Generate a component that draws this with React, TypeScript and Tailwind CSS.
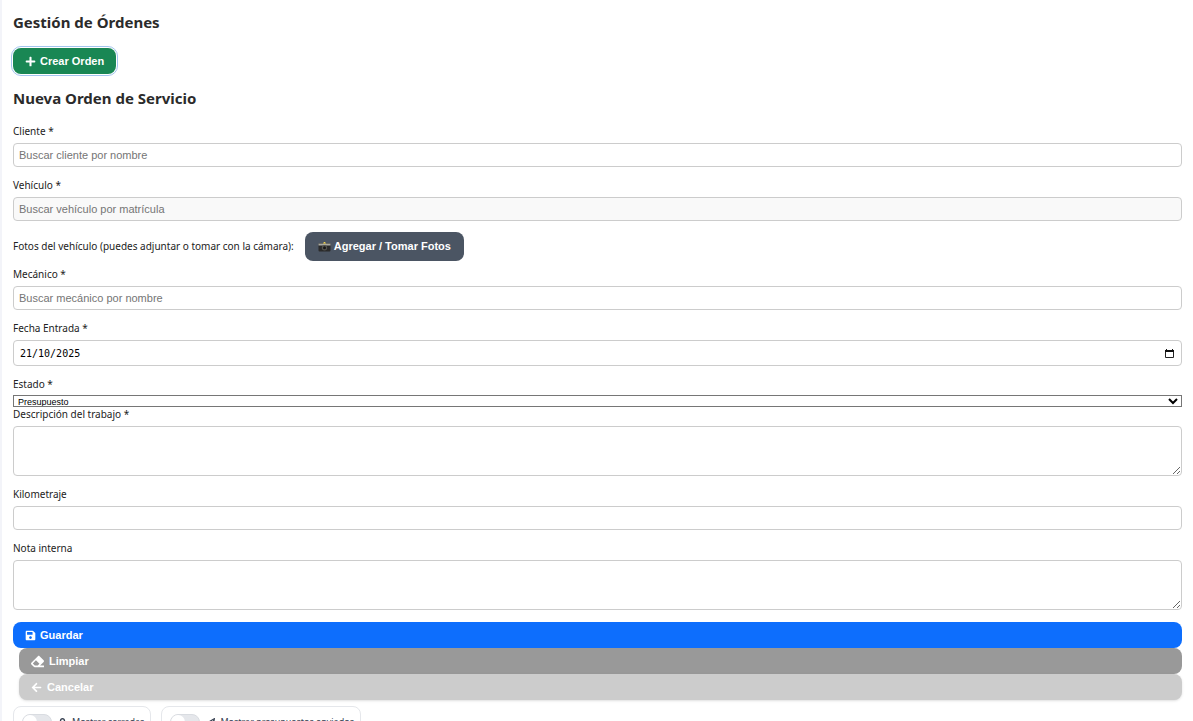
import { useState } from 'react';
import type { ReactNode } from 'react';
import { FaPlus, FaSave, FaEraser, FaArrowLeft, FaLock, FaPaperPlane } from 'react-icons/fa';

const inputClass =
    'block w-full h-6 px-[5px] border border-[#ccc] rounded bg-white font-["Liberation_Sans",sans-serif] text-[11px] text-black placeholder:text-[#757575] disabled:bg-[#f9f9f9]';
const areaClass =
    'block w-full h-[50px] p-[5px] border border-[#ccc] rounded bg-white resize-y font-["Liberation_Sans",sans-serif] text-[11px]';
const buttonClass =
    'flex items-center h-[26px] px-3 rounded-lg font-["Liberation_Sans",sans-serif] text-[11px] font-bold text-white';

type FieldProps = {
    id: string;
    label: string;
    children: ReactNode;
};

function Field({ id, label, children }: FieldProps) {
    return (
        <div className="mb-[11px]">
            <label htmlFor={id} className="block mb-1 leading-[15px]">
                {label}
            </label>
            {children}
        </div>
    );
}

function CameraIcon() {
    return (
        <svg width="13" height="11" viewBox="0 0 13 11" aria-hidden="true">
            <rect x="0.5" y="2" width="12" height="8.5" rx="1" fill="#2b2b2b" />
            <rect x="0.5" y="2.5" width="12" height="2" fill="#a9a9a0" />
            <path d="M5 2.5 6 1h1l1 1.5z" fill="#f2d64b" />
            <circle cx="6.5" cy="6.8" r="2.7" fill="#55554f" />
            <circle cx="6.5" cy="6.8" r="1.5" fill="#171717" />
        </svg>
    );
}

function CalendarIcon() {
    return (
        <svg width="9" height="9" viewBox="0 0 9 9" aria-hidden="true">
            <path d="M0.5 1.5h8v7h-8z" fill="none" stroke="#222" />
            <path d="M0 1h9v2H0zM1 0h1v1h-1zM7 0h1v1h-1z" fill="#111" />
        </svg>
    );
}

function Toggle({ icon, text }: { icon: ReactNode; text: string }) {
    return (
        <label className="flex items-center gap-[6px] h-8 pl-2 pr-[6px] border border-[#e5e7eb] rounded-lg text-[9px] text-[#374151]">
            <input
                type="checkbox"
                className="appearance-none w-[30px] h-4 rounded-full bg-[#e5e7eb] border border-[#d9dce1] before:block before:size-[14px] before:rounded-full before:bg-white checked:bg-[#0d6efd] checked:before:ml-[14px]"
            />
            <span className="flex items-center gap-[5px]">
                {icon}
                {text}
            </span>
        </label>
    );
}

export default function App() {
    const [cliente, setCliente] = useState('');
    const [mecanico, setMecanico] = useState('');
    const [fecha, setFecha] = useState('21/10/2025');

    return (
        <div className="min-h-screen border-l-2 border-[#f3f4f9] bg-white px-[11px] pt-[11px] font-['Noto_Sans',sans-serif] text-[10px] text-[#222]">
            <h2 className="mb-[15px] text-[15px] leading-[22px] font-bold text-[#2b2b2b]">
                Gestión de Órdenes
            </h2>
            <button
                type="button"
                className={`${buttonClass} gap-1 bg-[#198754] outline outline-offset-1 outline-[#a3c5ef]`}
            >
                <FaPlus size={11} />
                Crear Orden
            </button>

            <form onSubmit={(e) => e.preventDefault()}>
                <h2 className="mt-[13px] mb-[15px] text-[15px] leading-[22px] font-bold text-[#2b2b2b]">
                    Nueva Orden de Servicio
                </h2>

                <Field id="cliente" label="Cliente *">
                    <input
                        id="cliente"
                        type="text"
                        placeholder="Buscar cliente por nombre"
                        value={cliente}
                        onChange={(e) => setCliente(e.target.value)}
                        className={inputClass}
                    />
                </Field>
                <Field id="vehiculo" label="Vehículo *">
                    <input
                        id="vehiculo"
                        type="text"
                        placeholder="Buscar vehículo por matrícula"
                        disabled
                        className={inputClass}
                    />
                </Field>

                <div className="flex items-center gap-[11px] mb-[6px]">
                    <label htmlFor="fotos">
                        Fotos del vehículo (puedes adjuntar o tomar con la cámara):
                    </label>
                    <button
                        id="fotos"
                        type="button"
                        className="flex items-center gap-[3px] h-[29px] px-[13px] rounded-lg bg-[#4b5563] font-['Liberation_Sans',sans-serif] text-[11px] font-bold text-white"
                    >
                        <CameraIcon />
                        Agregar / Tomar Fotos
                    </button>
                </div>

                <Field id="mecanico" label="Mecánico *">
                    <input
                        id="mecanico"
                        type="text"
                        placeholder="Buscar mecánico por nombre"
                        value={mecanico}
                        onChange={(e) => setMecanico(e.target.value)}
                        className={inputClass}
                    />
                </Field>
                <Field id="fecha" label="Fecha Entrada *">
                    <div className="flex items-center h-[26px] pl-[6px] pr-[7px] border border-[#ccc] rounded bg-white">
                        <input
                            id="fecha"
                            type="text"
                            value={fecha}
                            onChange={(e) => setFecha(e.target.value)}
                            className="grow font-['DejaVu_Sans_Mono',monospace] text-[10px] text-black outline-none"
                        />
                        <button type="button" aria-label="Abrir calendario">
                            <CalendarIcon />
                        </button>
                    </div>
                </Field>

                <label htmlFor="estado" className="block mb-[3px] leading-[15px]">
                    Estado *
                </label>
                <select
                    id="estado"
                    className="block w-full h-3 border border-[#767676] bg-white font-['Liberation_Sans',sans-serif] text-[9px] leading-[10px] text-black"
                >
                    <option>Presupuesto</option>
                    <option>En proceso</option>
                    <option>Terminado</option>
                </select>

                <Field id="descripcion" label="Descripción del trabajo *">
                    <textarea id="descripcion" className={areaClass} />
                </Field>
                <Field id="kilometraje" label="Kilometraje">
                    <input id="kilometraje" type="text" className={inputClass} />
                </Field>
                <Field id="nota" label="Nota interna">
                    <textarea id="nota" className={areaClass} />
                </Field>

                <div className="flex flex-col mt-3">
                    <button type="submit" className={`${buttonClass} gap-1 bg-[#0d6efd]`}>
                        <FaSave size={11} />
                        Guardar
                    </button>
                    <button type="reset" className={`${buttonClass} ml-[6px] gap-[5px] bg-[#999]`}>
                        <FaEraser size={13} />
                        Limpiar
                    </button>
                    <button type="button" className={`${buttonClass} ml-[6px] gap-[5px] bg-[#ccc] shadow-sm`}>
                        <FaArrowLeft size={11} />
                        Cancelar
                    </button>
                </div>
            </form>

            <div className="flex gap-[10px] mt-[6px]">
                <Toggle icon={<FaLock size={9} />} text="Mostrar cerradas" />
                <Toggle icon={<FaPaperPlane size={9} />} text="Mostrar presupuestos enviados" />
            </div>
        </div>
    );
}
